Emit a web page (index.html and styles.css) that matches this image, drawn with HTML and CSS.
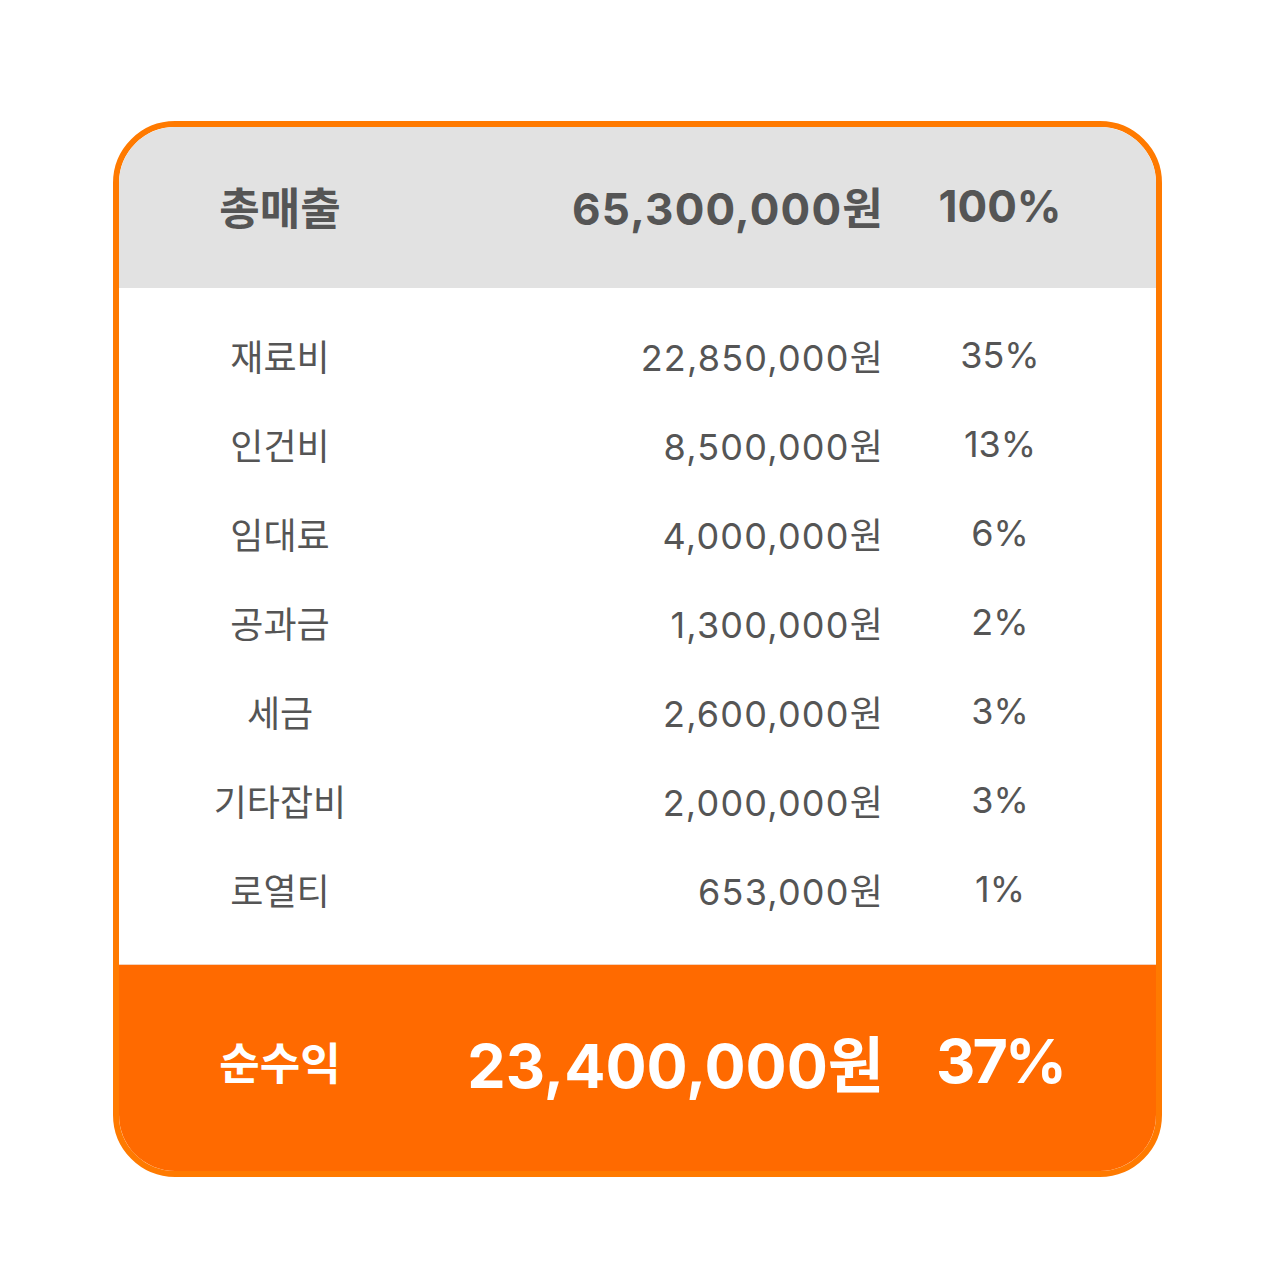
FILE: index.html
```html
<!DOCTYPE html>
<html lang="ko">
<head>
    <meta charset="UTF-8">
    <meta name="viewport" content="width=device-width, initial-scale=1.0">
    <title>월 손익 요약</title>
    <link rel="stylesheet" href="styles.css">
</head>
<body>
    <div class="card">
        <div class="row head">
            <span class="label">총매출</span>
            <span class="amount">65,300,000원</span>
            <span class="pct">100%</span>
        </div>

        <div class="body">
            <div class="row">
                <span class="label">재료비</span>
                <span class="amount">22,850,000원</span>
                <span class="pct">35%</span>
            </div>
            <div class="row">
                <span class="label">인건비</span>
                <span class="amount">8,500,000원</span>
                <span class="pct">13%</span>
            </div>
            <div class="row">
                <span class="label">임대료</span>
                <span class="amount">4,000,000원</span>
                <span class="pct">6%</span>
            </div>
            <div class="row">
                <span class="label">공과금</span>
                <span class="amount">1,300,000원</span>
                <span class="pct">2%</span>
            </div>
            <div class="row">
                <span class="label">세금</span>
                <span class="amount">2,600,000원</span>
                <span class="pct">3%</span>
            </div>
            <div class="row">
                <span class="label">기타잡비</span>
                <span class="amount">2,000,000원</span>
                <span class="pct">3%</span>
            </div>
            <div class="row">
                <span class="label">로열티</span>
                <span class="amount">653,000원</span>
                <span class="pct">1%</span>
            </div>
        </div>

        <div class="row foot">
            <span class="label">순수익</span>
            <span class="amount">23,400,000원</span>
            <span class="pct">37%</span>
        </div>
    </div>
</body>
</html>
```

FILE: styles.css
```css
body {
    margin: 0;
    background-color: #fff;
    font-family: Inter, "Noto Sans CJK KR", sans-serif;
    color: #555;
}
.card {
    width: 1037px;
    margin: 121px 0 0 113px;
    border: 6px solid #ff7a00;
    border-radius: 62px;
    overflow: hidden;
    background-color: #fff;
}
.row {
    display: grid;
    grid-template-columns: 322px 439px 240px;
    align-items: center;
    height: 89px;
    font-size: 36px;
}
.label {
    text-align: center;
    font-family: "Noto Sans CJK KR", sans-serif;
}
.amount {
    text-align: right;
    letter-spacing: 1.2px;
    margin-right: -4px;
}
.pct {
    text-align: center;
}
.head {
    height: 158px;
    padding-bottom: 3px;
    background-color: #e2e2e2;
    font-size: 44px;
    font-weight: 700;
}
.body {
    padding: 22px 0 31px;
    border-bottom: 1px solid #f3d2bd;
}
.foot {
    height: 192px;
    padding-bottom: 14px;
    background-color: #ff6a00;
    color: #fff;
    font-size: 61px;
    font-weight: 700;
}
.foot .label {
    font-size: 44px;
}
.foot .amount {
    letter-spacing: 0;
    margin-right: -4px;
}
.foot .pct {
    letter-spacing: -3px;
}
```
